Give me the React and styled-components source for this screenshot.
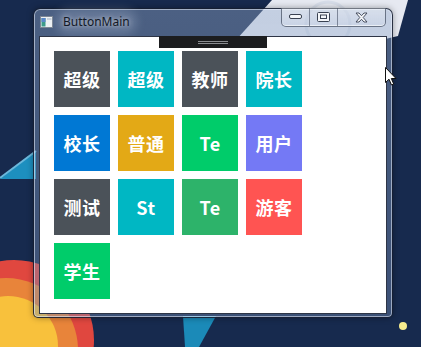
import React from 'react';
import styled, { createGlobalStyle } from 'styled-components';

const roles = [
  { label: '超级', color: '#4b5259' },
  { label: '超级', color: '#00b7c3' },
  { label: '教师', color: '#4b5259' },
  { label: '院长', color: '#00b7c3' },
  { label: '校长', color: '#0078d4' },
  { label: '普通', color: '#e3a916' },
  { label: 'Te', color: '#00cc6a' },
  { label: '用户', color: '#7479f5' },
  { label: '测试', color: '#4b5259' },
  { label: 'St', color: '#00b7c3' },
  { label: 'Te', color: '#2db36a' },
  { label: '游客', color: '#ff5452' },
  { label: '学生', color: '#00cc6a' },
];

function Wallpaper() {
  return (
    <WallpaperSvg width="421" height="347" viewBox="0 0 421 347">
      <rect width="421" height="347" fill="#172a4e" />
      <polygon points="236,40 272,0 408,0 398,36 330,52" fill="#e6e9f1" />
      <circle cx="328" cy="24" r="22" fill="none" stroke="#b9c8da" strokeWidth="3" opacity="0.35" />
      <polygon points="0,179 36,151 36,179" fill="#1d8fbf" />
      <line x1="0" y1="178" x2="36" y2="151" stroke="#6bb8dc" strokeWidth="2" />
      <polygon points="183,316 216,316 199,347 185,347" fill="#1b8ab8" />
      <circle cx="14" cy="340" r="80" fill="#e0473f" />
      <circle cx="6" cy="350" r="72" fill="#e8843a" />
      <circle cx="8" cy="346" r="50" fill="#f8c13c" />
      <circle cx="403" cy="326" r="4" fill="#f6ec8f" />
    </WallpaperSvg>
  );
}

function AppIcon() {
  return (
    <svg width="13" height="12" viewBox="0 0 13 12">
      <rect x="0.5" y="0.5" width="12" height="11" fill="#eef1f4" stroke="#7c8694" />
      <rect x="1.5" y="2" width="4" height="8.5" fill="#3c9a8a" />
      <rect x="1.5" y="2" width="4" height="4" fill="#5a86c8" />
      <rect x="7" y="2" width="4.5" height="2" fill="#c8d2dc" />
    </svg>
  );
}

function Cursor() {
  return (
    <CursorSvg width="12" height="19" viewBox="0 0 12 19">
      <path d="M0.5 0.5 L0.5 15.5 L4 12.2 L6.5 18 L8.7 17 L6.3 11.5 L11 11.5 Z" fill="#ffffff" stroke="#111111" strokeWidth="1" strokeLinejoin="round" />
    </CursorSvg>
  );
}

export default function App() {
  return (
    <Desktop>
      <GlobalStyle />
      <Wallpaper />
      <Window>
        <TitleBar>
          <IconSlot>
            <AppIcon />
          </IconSlot>
          <Title>ButtonMain</Title>
          <Controls>
            <ControlButton $w={27}>
              <svg width="13" height="6" viewBox="0 0 13 6">
                <rect x="0.5" y="0.5" width="12" height="4" rx="1.5" fill="#f4f6f9" stroke="#3a4252" />
              </svg>
            </ControlButton>
            <ControlButton $w={27}>
              <svg width="13" height="10" viewBox="0 0 13 10">
                <rect x="0.5" y="0.5" width="12" height="9" rx="1" fill="#f4f6f9" stroke="#3a4252" />
                <rect x="3.5" y="3" width="6" height="3.5" fill="none" stroke="#3a4252" />
              </svg>
            </ControlButton>
            <ControlButton $w={47} $last>
              <svg width="13" height="11" viewBox="0 0 13 11">
                <path d="M1 1 H4 L6.5 3.7 L9 1 H12 L8.2 5.5 L12 10 H9 L6.5 7.3 L4 10 H1 L4.8 5.5 Z" fill="#f4f6f9" stroke="#3a4252" strokeWidth="0.9" strokeLinejoin="round" />
              </svg>
            </ControlButton>
          </Controls>
        </TitleBar>
        <Client>
          <DevBar>
            <Grip />
            <Grip />
          </DevBar>
          <RoleGrid>
            {roles.map((role, i) => (
              <RoleButton key={i} $color={role.color}>
                {role.label}
              </RoleButton>
            ))}
          </RoleGrid>
        </Client>
      </Window>
      <Cursor />
    </Desktop>
  );
}

const GlobalStyle = createGlobalStyle`
  html, body {
    margin: 0;
    padding: 0;
    background: #172a4e;
    overflow: hidden;
  }
`;

const Desktop = styled.div`
  position: relative;
  width: 421px;
  height: 347px;
  overflow: hidden;
`;

const WallpaperSvg = styled.svg`
  position: absolute;
  left: 0;
  top: 0;
  display: block;
`;

const CursorSvg = styled.svg`
  position: absolute;
  left: 385px;
  top: 67px;
`;

const Window = styled.div`
  position: absolute;
  left: 33px;
  top: 8px;
  width: 360px;
  height: 310px;
  box-sizing: border-box;
  display: flex;
  flex-direction: column;
  padding: 0 5px 5px;
  border: 1px solid rgba(14, 22, 40, 0.85);
  border-radius: 7px 7px 5px 5px;
  background: linear-gradient(
    180deg,
    rgba(150, 172, 205, 0.42),
    rgba(120, 145, 185, 0.38)
  );
  box-shadow: inset 0 0 0 1px rgba(235, 242, 255, 0.55), 0 0 6px rgba(0, 0, 0, 0.35);
`;

const TitleBar = styled.div`
  height: 27px;
  flex: none;
  display: flex;
  align-items: flex-start;
`;

const IconSlot = styled.div`
  margin: 7px 0 0 1px;
  display: flex;
`;

const Title = styled.div`
  margin: 5px 0 0 8px;
  font-family: 'Noto Sans', 'Liberation Sans', sans-serif;
  font-size: 12px;
  line-height: 16px;
  color: #121826;
  padding: 0 2px;
  border-radius: 10px;
  background: rgba(200, 212, 232, 0.18);
  box-shadow: 0 0 10px 5px rgba(200, 212, 232, 0.22);
  text-shadow: 0 0 5px rgba(255, 255, 255, 0.85);
`;

const Controls = styled.div`
  margin-left: auto;
  margin-right: 1px;
  margin-top: -1px;
  display: flex;
  height: 18px;
  border: 1px solid rgba(70, 80, 100, 0.75);
  border-top: none;
  border-radius: 0 0 5px 5px;
  overflow: hidden;
  background: linear-gradient(180deg, rgba(255, 255, 255, 0.35), rgba(225, 232, 245, 0.2));
  box-shadow: inset 0 -1px 0 rgba(255, 255, 255, 0.6);
`;

const ControlButton = styled.div`
  width: ${(props) => props.$w}px;
  display: flex;
  align-items: center;
  justify-content: center;
  border-right: ${(props) => (props.$last ? 'none' : '1px solid rgba(70, 80, 100, 0.6)')};
`;

const Client = styled.div`
  position: relative;
  flex: 1;
  background: #ffffff;
  border: 1px solid #2e3546;
  padding: 14px;
`;

const DevBar = styled.div`
  position: absolute;
  top: -1px;
  left: 50%;
  transform: translateX(-50%);
  width: 108px;
  height: 12px;
  background: #1c1d1f;
  display: flex;
  flex-direction: column;
  align-items: center;
  justify-content: center;
  gap: 1px;
`;

const Grip = styled.div`
  width: 30px;
  height: 1px;
  background: #8a8c90;
`;

const RoleGrid = styled.div`
  display: grid;
  grid-template-columns: repeat(4, 56px);
  grid-auto-rows: 56px;
  gap: 8px;
`;

const RoleButton = styled.div`
  display: flex;
  align-items: center;
  justify-content: center;
  background: ${(props) => props.$color};
  color: #ffffff;
  font-family: 'Noto Sans CJK SC', 'Noto Sans', sans-serif;
  font-weight: 700;
  font-size: 18px;
  letter-spacing: 0.5px;
`;
